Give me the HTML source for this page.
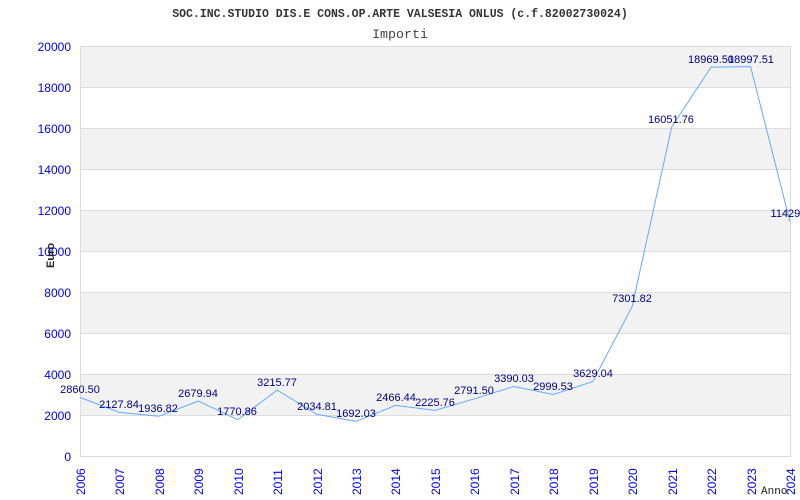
<!DOCTYPE html>
<html><head><meta charset="utf-8"><style>body{margin:0;background:#fff}svg{display:block}</style></head><body>
<svg width="800" height="500" xmlns="http://www.w3.org/2000/svg">
<rect width="800" height="500" fill="#fff"/>
<g fill="#f2f2f2">
<rect x="80" y="46" width="710" height="41"/>
<rect x="80" y="128" width="710" height="41"/>
<rect x="80" y="210" width="710" height="41"/>
<rect x="80" y="292" width="710" height="41"/>
<rect x="80" y="374" width="710" height="41"/>
</g>
<g stroke="#dcdcdc" stroke-width="1">
<line x1="80" y1="46.5" x2="790" y2="46.5"/><line x1="80" y1="87.5" x2="790" y2="87.5"/>
<line x1="80" y1="128.5" x2="790" y2="128.5"/><line x1="80" y1="169.5" x2="790" y2="169.5"/>
<line x1="80" y1="210.5" x2="790" y2="210.5"/><line x1="80" y1="251.5" x2="790" y2="251.5"/>
<line x1="80" y1="292.5" x2="790" y2="292.5"/><line x1="80" y1="333.5" x2="790" y2="333.5"/>
<line x1="80" y1="374.5" x2="790" y2="374.5"/><line x1="80" y1="415.5" x2="790" y2="415.5"/>
<line x1="80" y1="456.5" x2="790" y2="456.5"/>
<line x1="80.5" y1="46" x2="80.5" y2="457"/><line x1="790.5" y1="46" x2="790.5" y2="457"/>
</g>
<polyline fill="none" stroke="#66aaff" stroke-width="1" points="80,397.4 119.4,412.4 158.9,416.3 198.3,401.1 237.8,419.7 277.2,390.1 316.7,414.3 356.1,421.3 395.6,405.4 435,410.4 474.4,398.8 513.9,386.5 553.3,394.5 592.8,381.6 632.2,306.3 671.7,127 711.1,67.1 750.6,66.6 790,221.7"/>
<g font-family="Liberation Sans, sans-serif" font-size="11" fill="#000080" text-anchor="middle">
<text x="80" y="393">2860.50</text><text x="119" y="408">2127.84</text><text x="158" y="412">1936.82</text>
<text x="198" y="397">2679.94</text><text x="237" y="415">1770.86</text><text x="277" y="386">3215.77</text>
<text x="317" y="410">2034.81</text><text x="356" y="417">1692.03</text><text x="396" y="401">2466.44</text>
<text x="435" y="406">2225.76</text><text x="474" y="394">2791.50</text><text x="514" y="382">3390.03</text>
<text x="553" y="390">2999.53</text><text x="593" y="377">3629.04</text><text x="632" y="302">7301.82</text>
<text x="671" y="123">16051.76</text><text x="711" y="63">18969.50</text><text x="751" y="63">18997.51</text>
<text x="790" y="217">11429.4</text>
</g>
<g font-family="Liberation Sans, sans-serif" font-size="12" fill="#0000ee" text-anchor="end">
<text x="71" y="51">20000</text><text x="71" y="92">18000</text><text x="71" y="133">16000</text>
<text x="71" y="174">14000</text><text x="71" y="215">12000</text><text x="71" y="256">10000</text>
<text x="71" y="297">8000</text><text x="71" y="338">6000</text><text x="71" y="379">4000</text>
<text x="71" y="420">2000</text><text x="71" y="461">0</text>
</g>
<g font-family="Liberation Sans, sans-serif" font-size="12" fill="#0000ee">
<text transform="translate(85,495) rotate(-90)">2006</text><text transform="translate(124,495) rotate(-90)">2007</text>
<text transform="translate(164,495) rotate(-90)">2008</text><text transform="translate(203,495) rotate(-90)">2009</text>
<text transform="translate(243,495) rotate(-90)">2010</text><text transform="translate(282,495) rotate(-90)">2011</text>
<text transform="translate(322,495) rotate(-90)">2012</text><text transform="translate(361,495) rotate(-90)">2013</text>
<text transform="translate(400,495) rotate(-90)">2014</text><text transform="translate(440,495) rotate(-90)">2015</text>
<text transform="translate(479,495) rotate(-90)">2016</text><text transform="translate(519,495) rotate(-90)">2017</text>
<text transform="translate(558,495) rotate(-90)">2018</text><text transform="translate(598,495) rotate(-90)">2019</text>
<text transform="translate(637,495) rotate(-90)">2020</text><text transform="translate(677,495) rotate(-90)">2021</text>
<text transform="translate(716,495) rotate(-90)">2022</text><text transform="translate(756,495) rotate(-90)">2023</text>
<text transform="translate(795,495) rotate(-90)">2024</text>
</g>
<text x="400" y="17" text-anchor="middle" font-family="Liberation Mono, monospace" font-size="11.5" font-weight="bold" fill="#333">SOC.INC.STUDIO DIS.E CONS.OP.ARTE VALSESIA ONLUS (c.f.82002730024)</text>
<text x="400" y="38" text-anchor="middle" font-family="Liberation Mono, monospace" font-size="13.3" fill="#444">Importi</text>
<text transform="translate(54,268) rotate(-90)" font-family="Liberation Sans, sans-serif" font-size="11" font-weight="bold" fill="#222">Euro</text>
<text x="761" y="494" font-family="Liberation Mono, monospace" font-size="11" fill="#222">Anno</text>
</svg>
</body></html>
